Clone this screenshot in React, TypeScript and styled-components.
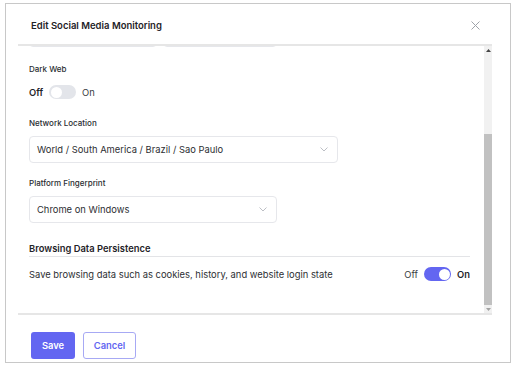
import React, { useLayoutEffect, useRef, useState } from 'react';
import styled, { createGlobalStyle } from 'styled-components';

const GlobalStyle = createGlobalStyle`
  html, body {
    margin: 0;
    padding: 0;
    background: #ffffff;
  }
  body {
    font-family: Inter, "Noto Sans", sans-serif;
    color: #1f2328;
  }
`;

const Chevron = () => (
  <svg width="8" height="5" viewBox="0 0 8 5">
    <polyline points="0.5,0.5 4,4 7.5,0.5" fill="none" stroke="#b4b8be" strokeWidth="0.9" />
  </svg>
);

const CloseIcon = () => (
  <svg width="9" height="9" viewBox="0 0 9 9">
    <path d="M0.5 0.5 L8.5 8.5 M8.5 0.5 L0.5 8.5" stroke="#9ea3a9" strokeWidth="1" />
  </svg>
);

const ArrowUp = () => (
  <svg width="5" height="3" viewBox="0 0 5 3">
    <polygon points="0,3 2.5,0 5,3" fill="#454545" />
  </svg>
);

const ArrowDown = () => (
  <svg width="5" height="3" viewBox="0 0 5 3">
    <polygon points="0,0 2.5,3 5,0" fill="#a3a3a3" />
  </svg>
);

type ToggleProps = { on: boolean };

const ToggleField = ({ on }: ToggleProps) => (
  <ToggleRow>
    <ToggleText $active={!on}>Off</ToggleText>
    <Switch $on={on}>
      <Knob />
    </Switch>
    <ToggleText $active={on}>On</ToggleText>
  </ToggleRow>
);

const App = () => {
  // 画面はスクロール済みの状態
  const scrollRef = useRef<HTMLDivElement>(null);
  const trackRef = useRef<HTMLDivElement>(null);
  const [thumb, setThumb] = useState({ top: 0, height: 0 });

  const updateThumb = () => {
    const el = scrollRef.current;
    const track = trackRef.current;
    if (!el || !track) {
      return;
    }
    const trackH = track.clientHeight;
    setThumb({
      top: (el.scrollTop / el.scrollHeight) * trackH,
      height: (el.clientHeight / el.scrollHeight) * trackH,
    });
  };

  useLayoutEffect(() => {
    if (scrollRef.current) {
      scrollRef.current.scrollTop = scrollRef.current.scrollHeight;
    }
    updateThumb();
  }, []);

  return (
    <>
      <GlobalStyle />
      <Frame>
        <Header>
          <Title>Edit Social Media Monitoring</Title>
          <CloseButton aria-label="Close">
            <CloseIcon />
          </CloseButton>
        </Header>

        <ScrollArea>
          <Viewport ref={scrollRef} onScroll={updateThumb}>
            <Field $top={18}>
              <Label>Monitor Name</Label>
              <TextInput $width={309} defaultValue="Brazil Social Watch" />
            </Field>

            <Field $top={16}>
              <PairRow>
                <div>
                  <Label>Username</Label>
                  <TextInput $width={128} defaultValue="" />
                </div>
                <div>
                  <Label>Password</Label>
                  <TextInput $width={114} type="password" defaultValue="" />
                </div>
              </PairRow>
            </Field>

            <Field $top={16}>
              <Label $gap={10}>Dark Web</Label>
              <ToggleField on={false} />
            </Field>

            <Field $top={18}>
              <Label>Network Location</Label>
              <Select $width={309}>
                <span>World / South America / Brazil / Sao Paulo</span>
                <Chevron />
              </Select>
            </Field>

            <Field $top={14}>
              <Label>Platform Fingerprint</Label>
              <Select $width={248}>
                <span>Chrome on Windows</span>
                <Chevron />
              </Select>
            </Field>

            <SectionTitle>Browsing Data Persistence</SectionTitle>
            <SettingRow>
              <Description>Save browsing data such as cookies, history, and website login state</Description>
              <ToggleField on={true} />
            </SettingRow>
          </Viewport>

          <ScrollBar>
            <ScrollButton>
              <ArrowUp />
            </ScrollButton>
            <Track ref={trackRef}>
              <Thumb style={{ top: thumb.top, height: thumb.height }} />
            </Track>
            <ScrollButton>
              <ArrowDown />
            </ScrollButton>
          </ScrollBar>
        </ScrollArea>

        <Footer>
          <PrimaryButton>Save</PrimaryButton>
          <SecondaryButton>Cancel</SecondaryButton>
        </Footer>
      </Frame>
    </>
  );
};

export default App;

const Frame = styled.div`
  box-sizing: border-box;
  width: 506px;
  height: 360px;
  margin: 3px 0 0 5px;
  border: 1px solid #c8c8c8;
  background: #ffffff;
  display: flex;
  flex-direction: column;
`;

const Header = styled.div`
  box-sizing: border-box;
  height: 40px;
  flex: none;
  display: flex;
  align-items: center;
  justify-content: space-between;
  padding: 2px 30px 0 25px;
`;

const Title = styled.div`
  font-size: 9.5px;
  font-weight: 600;
  color: #1f2328;
`;

const CloseButton = styled.button`
  border: none;
  background: none;
  padding: 0;
  display: flex;
  cursor: pointer;
`;

const ScrollArea = styled.div`
  box-sizing: border-box;
  flex: none;
  height: 271px;
  margin: 0 18px 0 12px;
  border-top: 2px solid #e6e6e6;
  border-bottom: 2px solid #e6e6e6;
  display: flex;
`;

const Viewport = styled.div`
  flex: 1;
  min-width: 0;
  padding: 0 14px 32px 11px;
  overflow-y: auto;
  scrollbar-width: none;

  &::-webkit-scrollbar {
    display: none;
  }
`;

const ScrollBar = styled.div`
  flex: none;
  width: 8px;
  display: flex;
  flex-direction: column;
  background: #f1f1f1;
`;

const ScrollButton = styled.div`
  flex: none;
  height: 8px;
  display: flex;
  align-items: center;
  justify-content: center;
`;

const Track = styled.div`
  flex: 1;
  position: relative;
`;

const Thumb = styled.div`
  position: absolute;
  left: 0;
  right: 0;
  background: #c1c1c1;
`;

const Field = styled.div<{ $top: number }>`
  margin-top: ${(p) => p.$top}px;
`;

const PairRow = styled.div`
  display: flex;
  gap: 6px;
`;

const Label = styled.div<{ $gap?: number }>`
  font-size: 8px;
  line-height: 12px;
  font-weight: 500;
  color: #2a2d31;
  margin-bottom: ${(p) => p.$gap ?? 7}px;
`;

const TextInput = styled.input<{ $width: number }>`
  box-sizing: border-box;
  display: block;
  width: ${(p) => p.$width}px;
  height: 27px;
  border: 1px solid #e6e7eb;
  border-radius: 4px;
  padding: 0 7px;
  font-family: inherit;
  font-size: 9.4px;
  color: #2d2f33;
  outline: none;
`;

const Select = styled.div<{ $width: number }>`
  box-sizing: border-box;
  width: ${(p) => p.$width}px;
  height: 27px;
  border: 1px solid #e6e7eb;
  border-radius: 4px;
  padding: 0 9px 0 7px;
  display: flex;
  align-items: center;
  justify-content: space-between;
  font-size: 9.4px;
  color: #2d2f33;
`;

const ToggleRow = styled.div`
  display: flex;
  align-items: center;
  gap: 6px;
`;

const ToggleText = styled.span<{ $active: boolean }>`
  font-size: 9.4px;
  font-weight: ${(p) => (p.$active ? 600 : 400)};
  color: ${(p) => (p.$active ? '#1f2328' : '#3a3d42')};
`;

const Switch = styled.div<{ $on: boolean }>`
  box-sizing: border-box;
  width: 27px;
  height: 14px;
  border-radius: 7px;
  padding: 1.5px;
  background: ${(p) => (p.$on ? '#6366f1' : '#e3e5ea')};
  display: flex;
  justify-content: ${(p) => (p.$on ? 'flex-end' : 'flex-start')};
`;

const Knob = styled.div`
  width: 11px;
  height: 11px;
  border-radius: 50%;
  background: #ffffff;
`;

const SectionTitle = styled.div`
  margin-top: 20px;
  padding-bottom: 1px;
  border-bottom: 1px solid #e3e4e7;
  font-size: 9.4px;
  line-height: 12px;
  font-weight: 600;
  color: #1f2328;
`;

const SettingRow = styled.div`
  margin-top: 10px;
  display: flex;
  align-items: center;
  justify-content: space-between;
`;

const Description = styled.div`
  font-size: 9.4px;
  color: #2d2f33;
`;

const Footer = styled.div`
  flex: none;
  display: flex;
  gap: 8px;
  padding: 17px 0 0 25px;
`;

const PrimaryButton = styled.button`
  box-sizing: border-box;
  width: 44px;
  height: 27px;
  border: none;
  border-radius: 3px;
  background: #6366f1;
  color: #ffffff;
  font-family: inherit;
  font-size: 9.4px;
  font-weight: 600;
  cursor: pointer;
`;

const SecondaryButton = styled.button`
  box-sizing: border-box;
  width: 53px;
  height: 27px;
  border: 1px solid #a7a9f4;
  border-radius: 3px;
  background: #ffffff;
  color: #6366f1;
  font-family: inherit;
  font-size: 9.4px;
  font-weight: 600;
  cursor: pointer;
`;
